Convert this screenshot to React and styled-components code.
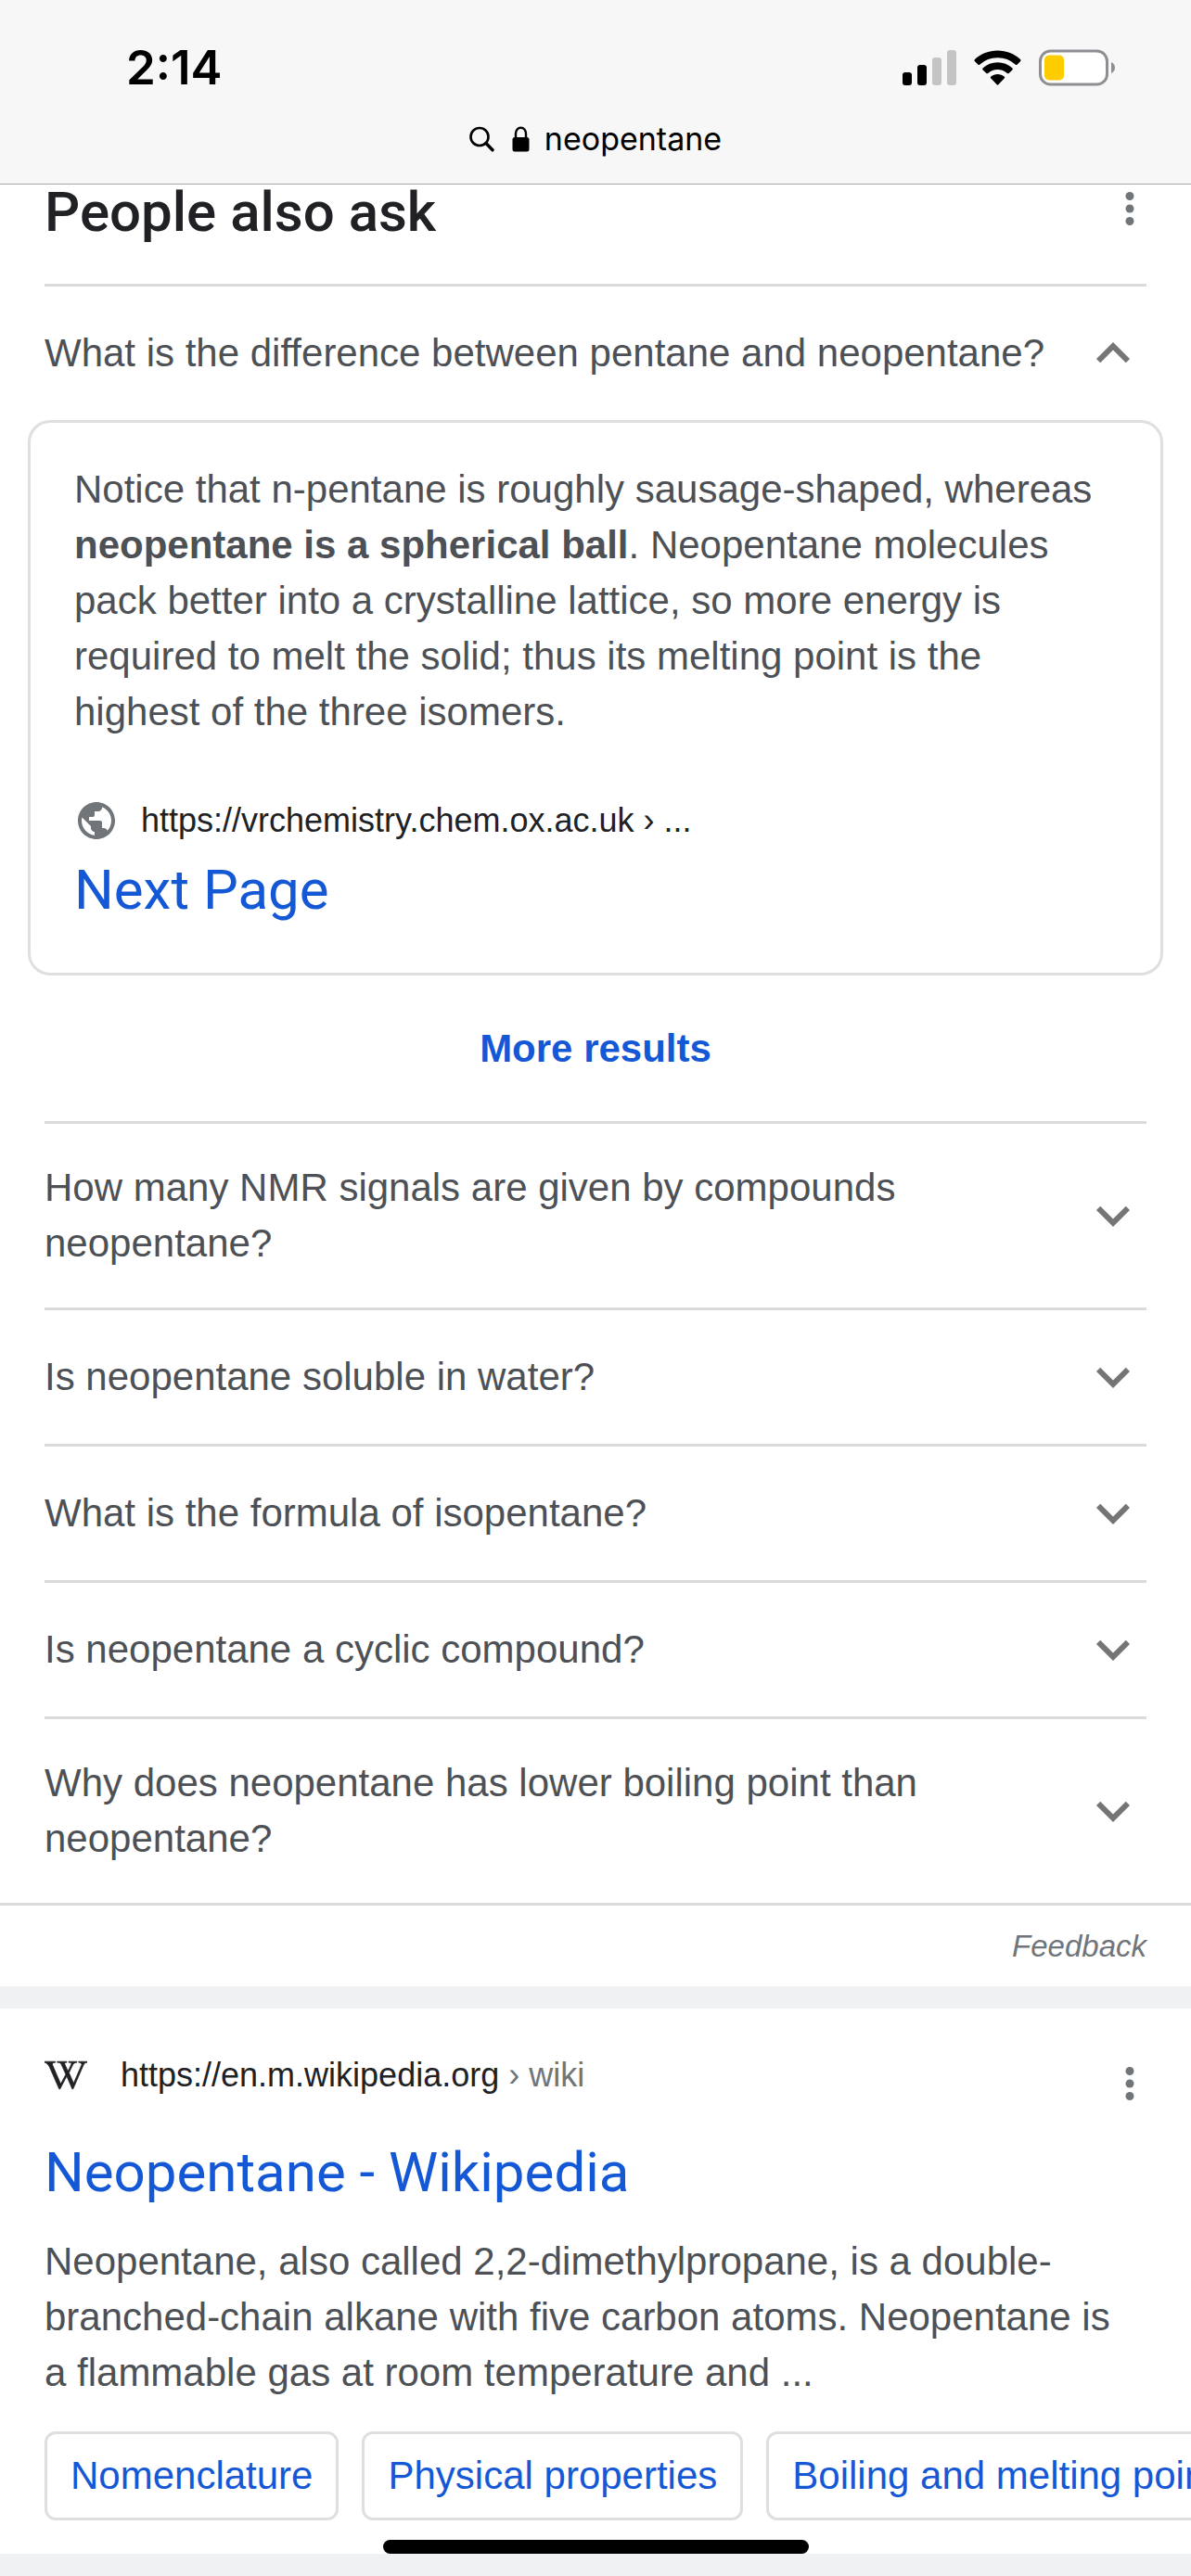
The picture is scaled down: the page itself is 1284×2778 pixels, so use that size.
import React, { useState } from 'react';
import styled, { createGlobalStyle } from 'styled-components';
import { MdExpandMore, MdExpandLess, MdPublic } from 'react-icons/md';
import { FaWikipediaW } from 'react-icons/fa';

const GlobalStyle = createGlobalStyle`
  * {
    box-sizing: border-box;
  }

  body {
    margin: 0;
    background-color: #f0f1f3;
    color: #4d5156;
    font-family: 'Liberation Sans', Arial, sans-serif;
    font-size: 42px;
    line-height: 60px;
    overflow-x: hidden;
  }

  h2, h3, p, ul {
    margin: 0;
    padding: 0;
  }

  button {
    padding: 0;
    border: none;
    background: none;
    font: inherit;
    color: inherit;
    cursor: pointer;
  }

  a {
    color: #1558d6;
    text-decoration: none;
  }

  svg {
    display: block;
    flex-shrink: 0;
  }
`;

const Page = styled.div`
  display: flex;
  flex-direction: column;
  min-height: 100vh;
  overflow: hidden;
`;

const Header = styled.header`
  padding: 34px 0 10px;
  background-color: #f7f7f7;
  border-bottom: 1px solid #a9a9a9;
  color: #000;
  font-family: Inter, sans-serif;
`;

const StatusBar = styled.div`
  display: flex;
  align-items: center;
  justify-content: space-between;
  height: 78px;
  padding: 0 82px 0 136px;
`;

const Time = styled.span`
  font-size: 51px;
  font-weight: 600;
`;

const StatusIcons = styled.div`
  display: flex;
  align-items: center;
  gap: 19px;
`;

const AddressBar = styled.div`
  display: flex;
  align-items: center;
  justify-content: center;
  height: 76px;
  font-size: 34px;
`;

const AddressText = styled.span`
  margin-left: 16px;
`;

const LockWrap = styled.span`
  margin-left: 19px;
`;

const Section = styled.section`
  background-color: #fff;
`;

const SectionHead = styled.div`
  display: flex;
  align-items: flex-start;
  justify-content: space-between;
  padding: 0 48px 47px;
`;

const SectionTitle = styled.h2`
  color: #202124;
  font-family: Roboto, sans-serif;
  font-size: 60px;
  font-weight: 500;
  line-height: 60px;
`;

const MenuButton = styled.button`
  display: flex;
  align-items: center;
  justify-content: center;
  width: 36px;
  height: ${({ $tall }) => ($tall ? '72px' : '52px')};
`;

const Question = styled.button`
  display: flex;
  align-items: center;
  justify-content: space-between;
  width: calc(100% - 96px);
  margin: 0 48px;
  padding: 36px 0;
  border-top: 3px solid #dadada;
  text-align: left;

  svg {
    color: #757575;
  }
`;

const QuestionText = styled.span`
  max-width: 1100px;
  padding: 3px 0;
`;

const Card = styled.div`
  margin: 0 30px;
  padding: 42px 47px 53px;
  border: 3px solid #dfdfdf;
  border-radius: 24px;
`;

const Source = styled.div`
  display: flex;
  align-items: center;
  gap: ${({ $gap }) => $gap};
  color: #202124;
  font-size: 36px;
  line-height: 54px;
`;

const CardSource = styled(Source)`
  margin: 60px 0 12px;

  svg {
    color: #70757a;
  }
`;

const Favicon = styled(FaWikipediaW)`
  width: 46px;
  height: 38px;
  stroke: currentColor;
  stroke-width: 10px;
`;

const Crumb = styled.span`
  color: #70757a;
`;

const ResultTitle = styled.h3`
  font-family: Roboto, sans-serif;
  font-size: 60px;
  font-weight: 400;
  line-height: 72px;
`;

const MoreResults = styled.a`
  display: flex;
  align-items: center;
  justify-content: center;
  height: 157px;
  font-weight: 700;
`;

const FeedbackBar = styled.div`
  display: flex;
  align-items: center;
  justify-content: flex-end;
  height: 90px;
  padding: 0 48px;
  border-top: 3px solid #dadada;
`;

const FeedbackLink = styled.a`
  color: #70757a;
  font-size: 33px;
  font-style: italic;
`;

const Result = styled(Section)`
  margin-top: 24px;
  padding: 45px 48px 36px;
`;

const ResultHead = styled.div`
  display: flex;
  align-items: flex-start;
  justify-content: space-between;
  margin-bottom: 24px;
`;

const Snippet = styled.p`
  margin: 30px 0 33px;
  padding-right: 16px;
`;

const Chips = styled.div`
  display: flex;
  gap: 25px;
  margin-right: -48px;
  overflow: hidden;
`;

const Chip = styled.a`
  flex-shrink: 0;
  height: 96px;
  padding: 15px 25px;
  border: 3px solid #dfdfdf;
  border-radius: 12px;
  white-space: nowrap;
`;

const HomeIndicator = styled.div`
  position: fixed;
  left: 50%;
  bottom: 24px;
  width: 459px;
  height: 15px;
  margin-left: -229px;
  border-radius: 8px;
  background-color: #000;
`;

const SignalIcon = () => (
  <svg width="58" height="38" viewBox="0 0 58 38">
    <rect x="0" y="24" width="10" height="14" rx="3" />
    <rect x="16" y="16" width="10" height="22" rx="3" />
    <rect x="32" y="8" width="10" height="30" rx="3" fill="#c4c4c4" />
    <rect x="48" y="0" width="10" height="38" rx="3" fill="#c4c4c4" />
  </svg>
);

const WifiIcon = () => (
  <svg width="51" height="38" viewBox="0 0 51 38">
    <path d="M25.500 0.500C35 0.500 43.500 4 50 10c.7.700.7 1.500 0 2.200l-3.300 3.300c-.7.700-1.400.7-2.100 0A28 28 0 0 0 25.500 8.200 28 28 0 0 0 6.400 15.500c-.7.700-1.400.7-2.100 0L1 12.200c-.7-.7-.7-1.500 0-2.200C7.500 4 16 .500 25.500.500z" />
    <path d="M25.500 13.200c6 0 11.500 2.200 15.700 6 .8.700.8 1.500.1 2.200l-3.400 3.400c-.7.700-1.400.7-2.100.1a15.500 15.500 0 0 0-20.600 0c-.7.600-1.400.6-2.100-.1l-3.400-3.400c-.7-.7-.7-1.500.1-2.200 4.200-3.800 9.700-6 15.700-6z" />
    <path d="M25.500 26c2.700 0 5.200.9 7.100 2.500.8.700.8 1.400.1 2.100l-6.200 6.500c-.7.700-1.300.7-2 0l-6.200-6.500c-.7-.7-.7-1.400.1-2.100 1.900-1.600 4.400-2.500 7.100-2.500z" />
  </svg>
);

const BatteryIcon = () => (
  <svg width="82" height="40" viewBox="0 0 82 40">
    <rect x="1.500" y="2" width="72" height="36" rx="11" fill="#fff" stroke="#8e8f92" strokeWidth="3" />
    <rect x="6" y="6.500" width="21" height="27" rx="5" fill="#ffcc00" />
    <path d="M78 14c2.600 1 4 3.400 4 6s-1.400 5-4 6z" fill="#8e8f92" />
  </svg>
);

const SearchIcon = () => (
  <svg width="27" height="28" viewBox="0 0 27 28" fill="none" stroke="#000" strokeLinecap="round">
    <circle cx="11" cy="11.500" r="9.500" strokeWidth="2.600" />
    <path d="M18 18.500l7 7.300" strokeWidth="3.400" />
  </svg>
);

const LockIcon = () => (
  <svg width="19" height="28" viewBox="0 0 19 28">
    <path d="M4 14V8a5.500 6.300 0 0 1 11 0v6" fill="none" stroke="#000" strokeWidth="2.400" />
    <rect x="0.500" y="12" width="18" height="15.500" rx="2.500" />
  </svg>
);

const DotsIcon = () => (
  <svg width="10" height="36" viewBox="0 0 10 36" fill="#70757a">
    <circle cx="5" cy="4.500" r="4.500" />
    <circle cx="5" cy="18" r="4.500" />
    <circle cx="5" cy="31.500" r="4.500" />
  </svg>
);

const questions = [
  'How many NMR signals are given by compounds neopentane?',
  'Is neopentane soluble in water?',
  'What is the formula of isopentane?',
  'Is neopentane a cyclic compound?',
  'Why does neopentane has lower boiling point than neopentane?',
];

const chips = ['Nomenclature', 'Physical properties', 'Boiling and melting points'];

const App = () => {
  const [open, setOpen] = useState(true);

  return (
    <>
      <GlobalStyle />
      <Page>
        <Header>
          <StatusBar>
            <Time>2:14</Time>
            <StatusIcons>
              <SignalIcon />
              <WifiIcon />
              <BatteryIcon />
            </StatusIcons>
          </StatusBar>
          <AddressBar>
            <SearchIcon />
            <LockWrap><LockIcon /></LockWrap>
            <AddressText>neopentane</AddressText>
          </AddressBar>
        </Header>

        <Section>
          <SectionHead>
            <SectionTitle>People also ask</SectionTitle>
            <MenuButton aria-label="More options"><DotsIcon /></MenuButton>
          </SectionHead>
          <Question aria-expanded={open} onClick={() => setOpen(!open)}>
            <QuestionText>What is the difference between pentane and neopentane?</QuestionText>
            {open ? <MdExpandLess size={72} /> : <MdExpandMore size={72} />}
          </Question>
          {open && (
            <>
              <Card>
                <p>
                  Notice that n-pentane is roughly sausage-shaped, whereas{' '}
                  <b>neopentane is a spherical ball</b>. Neopentane molecules pack better into a
                  crystalline lattice, so more energy is required to melt the solid; thus its
                  melting point is the highest of the three isomers.
                </p>
                <CardSource $gap="24px">
                  <MdPublic size={48} />
                  <span>https://vrchemistry.chem.ox.ac.uk › ...</span>
                </CardSource>
                <ResultTitle><a href="#next">Next Page</a></ResultTitle>
              </Card>
              <MoreResults href="#more">More results</MoreResults>
            </>
          )}
          {questions.map((question) => (
            <Question key={question} aria-expanded={false}>
              <QuestionText>{question}</QuestionText>
              <MdExpandMore size={72} />
            </Question>
          ))}
          <FeedbackBar>
            <FeedbackLink href="#feedback">Feedback</FeedbackLink>
          </FeedbackBar>
        </Section>

        <Result>
          <ResultHead>
            <Source $gap="36px">
              <Favicon />
              <span>https://en.m.wikipedia.org <Crumb>› wiki</Crumb></span>
            </Source>
            <MenuButton $tall aria-label="About this result"><DotsIcon /></MenuButton>
          </ResultHead>
          <ResultTitle><a href="#wikipedia">Neopentane - Wikipedia</a></ResultTitle>
          <Snippet>
            Neopentane, also called 2,2-dimethylpropane, is a double-branched-chain alkane with
            five carbon atoms. Neopentane is a flammable gas at room temperature and ...
          </Snippet>
          <Chips>
            {chips.map((chip) => (
              <Chip key={chip} href="#section">{chip}</Chip>
            ))}
          </Chips>
        </Result>
        <HomeIndicator />
      </Page>
    </>
  );
};

export default App;
